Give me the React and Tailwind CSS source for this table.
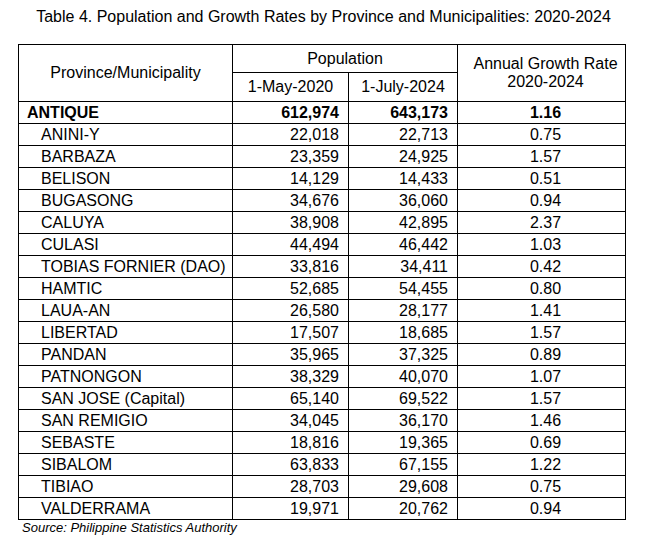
import React from "react";

const rows = [
    ["ANINI-Y", "22,018", "22,713", "0.75"],
    ["BARBAZA", "23,359", "24,925", "1.57"],
    ["BELISON", "14,129", "14,433", "0.51"],
    ["BUGASONG", "34,676", "36,060", "0.94"],
    ["CALUYA", "38,908", "42,895", "2.37"],
    ["CULASI", "44,494", "46,442", "1.03"],
    ["TOBIAS FORNIER (DAO)", "33,816", "34,411", "0.42"],
    ["HAMTIC", "52,685", "54,455", "0.80"],
    ["LAUA-AN", "26,580", "28,177", "1.41"],
    ["LIBERTAD", "17,507", "18,685", "1.57"],
    ["PANDAN", "35,965", "37,325", "0.89"],
    ["PATNONGON", "38,329", "40,070", "1.07"],
    ["SAN JOSE (Capital)", "65,140", "69,522", "1.57"],
    ["SAN REMIGIO", "34,045", "36,170", "1.46"],
    ["SEBASTE", "18,816", "19,365", "0.69"],
    ["SIBALOM", "63,833", "67,155", "1.22"],
    ["TIBIAO", "28,703", "29,608", "0.75"],
    ["VALDERRAMA", "19,971", "20,762", "0.94"],
];

export default function App() {
    return (
        <div className="w-[647px] h-[545px] bg-white text-black font-['Liberation_Sans',Arial,sans-serif]">
            <h1 className="pt-[8px] text-center text-[16px] leading-[18px] font-normal">
                Table 4. Population and Growth Rates by Province and Municipalities: 2020-2024
            </h1>

            <div className="pl-[18px] mt-[18px]">
                <table className="w-[607px] border-collapse table-fixed text-[16px] leading-[18px]">
                    <colgroup>
                        <col className="w-[214px]" />
                        <col className="w-[116px]" />
                        <col className="w-[109px]" />
                        <col className="w-[168px]" />
                    </colgroup>
                    <thead>
                        <tr className="h-[28px]">
                            <th rowSpan={2} className="border border-black font-normal text-center">
                                Province/Municipality
                            </th>
                            <th colSpan={2} className="border border-black font-normal text-center">
                                Population
                            </th>
                            <th rowSpan={2} className="border border-black font-normal text-center pl-[8px]">
                                Annual Growth Rate
                                <br />
                                2020-2024
                            </th>
                        </tr>
                        <tr className="h-[29px]">
                            <th className="border border-black font-normal text-center">1-May-2020</th>
                            <th className="border border-black font-normal text-center">1-July-2024</th>
                        </tr>
                    </thead>
                    <tbody>
                        <tr className="h-[22px] font-bold">
                            <td className="border border-black pl-[8px]">ANTIQUE</td>
                            <td className="border border-black text-right pr-[9px]">612,974</td>
                            <td className="border border-black text-right pr-[9px]">643,173</td>
                            <td className="border border-black text-center pl-[8px]">1.16</td>
                        </tr>
                        {rows.map(([name, p2020, p2024, rate]) => (
                            <tr key={name} className="h-[22px]">
                                <td className="border border-black pl-[22px]">{name}</td>
                                <td className="border border-black text-right pr-[9px]">{p2020}</td>
                                <td className="border border-black text-right pr-[9px]">{p2024}</td>
                                <td className="border border-black text-center pl-[8px]">{rate}</td>
                            </tr>
                        ))}
                    </tbody>
                </table>
                <p className="pl-[4px] text-[13px] leading-[16px] italic">
                    Source: Philippine Statistics Authority
                </p>
            </div>
        </div>
    );
}
